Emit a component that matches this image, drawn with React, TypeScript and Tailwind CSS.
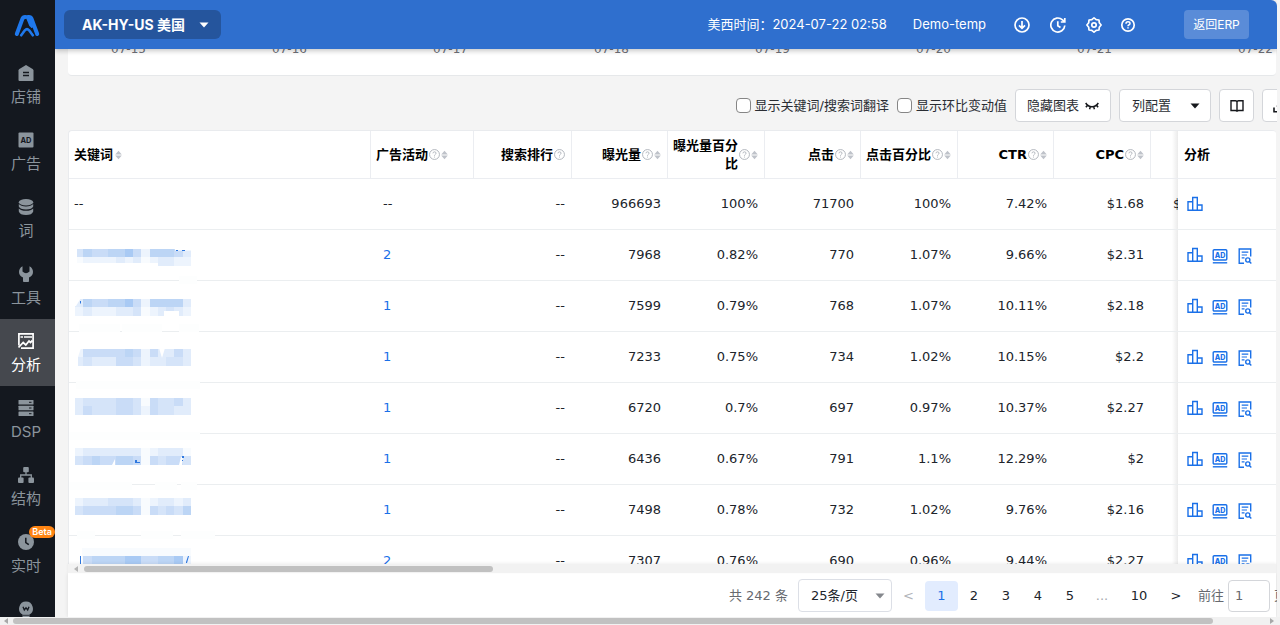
import React from "react";

type IconProps = { className?: string };

const NAV_ICON = "block size-4 shrink-0";

function Logo() {
  return (
    <svg viewBox="0 0 26 22" className="h-[22px] w-[26px]" aria-hidden="true">
      <path d="M2.800 19 L8.400 3.900 Q9.200 2 11 2 H11.500" fill="none" stroke="#1f78ec" strokeWidth="4" strokeLinecap="round" strokeLinejoin="round" />
      <path d="M23.200 19 L17.600 3.900 Q16.800 2 15 2 H13.800 L17.500 11" fill="none" stroke="#1f78ec" strokeWidth="4" strokeLinecap="round" strokeLinejoin="round" />
      <path d="M7.200 20.300 L10.900 15.300 Q13 13 15.100 15.300 L18.800 20.300" fill="none" stroke="#1f78ec" strokeWidth="2.600" strokeLinecap="round" strokeLinejoin="round" />
      <path d="M6.200 18.500 L9.600 12.200 Q13 10 16.400 12.200 L19.800 18.500" fill="none" stroke="#14181f" strokeWidth="1" />
    </svg>
  );
}

function ShopIcon() {
  return (
    <svg viewBox="0 0 16 16" className={NAV_ICON} fill="currentColor">
      <path d="M8 0 L14.6 4 Q15.5 4.600 15.500 5.500 V15 Q15.500 16 14.500 16 H1.500 Q.5 16 .5 15 V5.500 Q.5 4.600 1.400 4 Z" />
      <path d="M5 7.500 H11 M5 10.500 H11" stroke="#14181f" strokeWidth="1.300" />
    </svg>
  );
}

function AdSolidIcon() {
  return (
    <svg viewBox="0 0 16 16" className={NAV_ICON}>
      <rect x=".5" y=".5" width="15" height="15" rx="1" fill="currentColor" />
      <text x="8" y="10.700" textAnchor="middle" fontSize="7.500" fontWeight="700" fontFamily="Inter, sans-serif" fill="#14181f">AD</text>
    </svg>
  );
}

function StackIcon() {
  return (
    <svg viewBox="0 0 16 16" className={NAV_ICON} fill="currentColor">
      <ellipse cx="8" cy="3.200" rx="7.200" ry="3.200" />
      <path d="M.8 5 Q3 7.400 8 7.400 T15.200 5 V7.400 Q14 10.400 8 10.400 T.8 7.400 Z" />
      <path d="M.8 9.400 Q3 11.700 8 11.700 T15.200 9.400 V12.500 Q14 16 8 16 T.8 12.500 Z" />
    </svg>
  );
}

function WrenchIcon() {
  return (
    <svg viewBox="0 0 16 16" className={NAV_ICON} fill="currentColor">
      <path d="M4.500 .3 V5.500 Q8 9 11.500 5.500 V.3 Q15 2.200 15 6 Q15 9.800 11 11.600 V15 Q11 16.500 8 16.500 Q5 16.500 5 15 V11.600 Q1 9.800 1 6 Q1 2.200 4.500 .3 Z" />
      <path d="M6 0 V4.500 Q8 6.400 10 4.500 V0 Z" fill="#14181f" />
    </svg>
  );
}

function AnalysisIcon() {
  return (
    <svg viewBox="0 0 16 16" className={NAV_ICON} fill="none" stroke="currentColor">
      <path d="M.9 12.500 V.9 H15.100 V15.100 H3" strokeWidth="1.700" />
      <path d="M2.500 4 H5 M6 4 H14" strokeWidth="1.300" />
      <path d="M.5 14.500 L5.200 9.500 L7.800 12 L11 8 L12.500 9.500 L14.500 7.500" strokeWidth="1.800" />
    </svg>
  );
}

function ServerIcon() {
  return (
    <svg viewBox="0 0 16 16" className={NAV_ICON} fill="currentColor">
      <rect x=".5" y="0" width="15" height="4.600" rx=".6" />
      <rect x=".5" y="5.700" width="15" height="4.600" rx=".6" />
      <rect x=".5" y="11.400" width="15" height="4.600" rx=".6" />
      <path d="M11 2.300 H13.500 M11 8 H13.500 M11 13.700 H13.500" stroke="#14181f" strokeWidth="1" />
    </svg>
  );
}

function TreeIcon() {
  return (
    <svg viewBox="0 0 16 16" className={NAV_ICON} fill="currentColor">
      <rect x="5.200" y="0" width="5.600" height="5.200" rx="1" />
      <rect x="0" y="10.500" width="5.600" height="5.500" rx="1" />
      <rect x="10.400" y="10.500" width="5.600" height="5.500" rx="1" />
      <path d="M8 4 V8 M2.700 11.500 V8 H13.300 V11.500" fill="none" stroke="currentColor" strokeWidth="1.300" />
    </svg>
  );
}

function ClockIcon() {
  return (
    <svg viewBox="0 0 16 16" className={NAV_ICON}>
      <circle cx="8" cy="8" r="8" fill="currentColor" />
      <path d="M7.800 3.700 V8.500 L10.800 10.600" fill="none" stroke="#14181f" strokeWidth="1.500" />
    </svg>
  );
}

function BulbIcon() {
  return (
    <svg viewBox="0 0 16 16" className={NAV_ICON}>
      <path d="M8 .5 A7 7 0 0 1 11.500 13.500 V16 H4.500 V13.500 A7 7 0 0 1 8 .5 Z" fill="currentColor" />
      <path d="M5 5.800 L6.300 9 L8 6.800 L9.700 9 L11 5.800" fill="none" stroke="#14181f" strokeWidth="1.300" />
      <path d="M4.500 14.300 H11.500" stroke="#14181f" strokeWidth=".8" />
    </svg>
  );
}

function HeaderIcon({ children }: { children: React.ReactNode }) {
  return (
    <svg viewBox="0 0 16 16" className="block size-4" fill="none" stroke="currentColor" strokeWidth="1.700">
      {children}
    </svg>
  );
}

function Caret({ className = "" }: IconProps) {
  return (
    <svg viewBox="0 0 10 6" className={"pointer-events-none block h-1.5 w-2.5 shrink-0 " + className} fill="currentColor">
      <path d="M.5 .5 H9.500 L5 5.500 Z" />
    </svg>
  );
}

function HelpMark() {
  return (
    <svg viewBox="0 0 12 12" className="block size-[11px] shrink-0" fill="none" stroke="#adb1b9">
      <circle cx="6" cy="6" r="5.400" />
      <path d="M4.300 4.700 Q4.400 3.100 6 3.100 Q7.700 3.100 7.700 4.600 Q7.700 5.400 6.700 6 Q6 6.400 6 7.300 M6 8.300 V9.300" />
    </svg>
  );
}

function SortMark() {
  return (
    <svg viewBox="0 0 7 10" className="block h-2.5 w-[7px] shrink-0" fill="#bfc3ca">
      <path d="M3.500 .8 L6.800 4.400 H.2 Z M3.500 9.200 L.2 5.600 H6.800 Z" />
    </svg>
  );
}

function BarsIcon() {
  return (
    <svg viewBox="0 0 16 16" className="block size-4" fill="none" stroke="#1a70e8" strokeWidth="1.400">
      <path d="M1 14.300 V5.700 H5.700 V14.300 Z M5.700 14.300 V1.500 H10.300 V14.300 Z M10.300 14.300 V9 H15 V14.300 Z" />
    </svg>
  );
}

function AdOutlineIcon() {
  return (
    <svg viewBox="0 0 16 16" className="block size-4">
      <rect x="1.200" y="1.700" width="13.600" height="10.300" rx="1" fill="none" stroke="#1a70e8" strokeWidth="1.400" />
      <path d="M.8 14.800 H15.200" stroke="#1a70e8" strokeWidth="1.400" />
      <text x="8" y="9.500" textAnchor="middle" fontSize="7.200" fontWeight="800" fontFamily="Inter, sans-serif" fill="#1a70e8">AD</text>
    </svg>
  );
}

function DocSearchIcon() {
  return (
    <svg viewBox="0 0 16 16" className="block size-4" fill="none" stroke="#1a70e8" strokeWidth="1.400">
      <path d="M7 15.300 H2.200 V1 H13.700 V8.500" />
      <path d="M4.700 4.200 H11.300 M4.700 7 H10 M4.700 9.800 H7.500" strokeWidth="1.200" />
      <circle cx="10.800" cy="12" r="2.100" />
      <path d="M12.300 13.500 L14.300 15.500" />
    </svg>
  );
}

const NAV = [
  { label: "店铺", icon: ShopIcon },
  { label: "广告", icon: AdSolidIcon },
  { label: "词", icon: StackIcon },
  { label: "工具", icon: WrenchIcon },
  { label: "分析", icon: AnalysisIcon, active: true },
  { label: "DSP", icon: ServerIcon },
  { label: "结构", icon: TreeIcon },
  { label: "实时", icon: ClockIcon, badge: "Beta" },
  { label: "", icon: BulbIcon },
];

const CHART_DATES = ["07-15", "07-16", "07-17", "07-18", "07-19", "07-20", "07-21", "07-22"];

const COLUMNS = [
  { label: "广告活动", help: true, sort: true, left: true },
  { label: "搜索排行", help: true, sort: false },
  { label: "曝光量", help: true, sort: true },
  { label: "曝光量百分比", help: true, sort: true },
  { label: "点击", help: true, sort: true },
  { label: "点击百分比", help: true, sort: true },
  { label: "CTR", help: true, sort: true },
  { label: "CPC", help: true, sort: true },
];

const TINTS: Record<string, string> = {
  a: "#f8fbfe",
  b: "#edf4fd",
  c: "#e1ecfb",
  d: "#d5e4f9",
  e: "#c9dcf7",
  f: "#bcd5f5",
  g: "#a9caf4",
};

type Mask = {
  y: number;
  top: string;
  bottom: string;
  clears?: string;
  marks?: string;
  smudges?: [number, number, number][];
};

const MASKS: Mask[] = [
  { y: 19, top: "dfeeffgebfffec", bottom: "abbbbcbcabccbb", clears: "M0 18h2v17H0Z M87 19h13v1.500h16v-3H87Z M0 33h83v3H0Z", marks: "M101 20h2v1h-2Z M107 20h3v1h-3Z", smudges: [[104, 18, 46]] },
  { y: 18, top: "cfeeffgebffffc", bottom: "bcbbbccdabcdcb", clears: "M0 17h6l-5 8H0Z M89 30h15v5H89Z", marks: "M5 20h1v2l-1 1Z", smudges: [[4, 41, 43], [47, 40, 43], [104, 20, 43]] },
  { y: 17, top: "beeeeefebeccec", bottom: "cdccceedbccddc", clears: "M0 16h6l-3 9v10H0Z M84 16h6l-3 10Z", smudges: [[1, 124, 49]] },
  { y: 15, top: "cddddeedaeddec", bottom: "cedddeedbeddcc", smudges: [[-6, 131, 49]] },
  { y: 14, top: "bcccccccabccca", bottom: "defeeffeaedeed", clears: "M37 31h3v-6Z M104 31l2-8h2l-1 8Z", marks: "M60 26h2v2h3v1h-5Z M107 22h2v2h-2Z M107 26h1v1h-1Z", smudges: [[-6, 63, 48], [80, 22, 48], [106, 16, 48]] },
  { y: 13, top: "bcccdddcabccbc", bottom: "deeeeffeaededfd", smudges: [[2, 18, 46], [66, 32, 46], [106, 34, 46]] },
  { y: 12, top: "aaaaaaaaaaaaaa", bottom: "aeffffggeeffgb", clears: "M0 11h7v18H0Z", marks: "M5 20h1v8h-1Z M113 20h1l-2 7h-1v-1Z" },
];

function MaskedKeyword({ mask }: { mask: Mask }) {
  const cells = (line: string, y: number) =>
    line
      .slice(0, 14)
      .split("")
      .map((t, i) => (
        <rect key={i} x={(i * 116) / 14} y={y} width={116 / 14} height={8.4} fill={TINTS[t]} shapeRendering="crispEdges" />
      ));
  return (
    <svg viewBox="0 0 116 50" className="block h-[50px] w-[116px] overflow-visible" aria-label="masked keyword">
      {cells(mask.top, mask.y)}
      {cells(mask.bottom, mask.y + 8.4)}
      {mask.clears && <path d={mask.clears} fill="#fff" />}
      {mask.marks && <path d={mask.marks} fill="#2f78df" />}
      {mask.smudges?.map(([x, w, y]) => (
        <rect key={x} x={x} y={y} width={w} height="8" fill="#fdfefe" />
      ))}
    </svg>
  );
}

const ROWS = [
  ["2", "--", "7968", "0.82%", "770", "1.07%", "9.66%", "$2.31"],
  ["1", "--", "7599", "0.79%", "768", "1.07%", "10.11%", "$2.18"],
  ["1", "--", "7233", "0.75%", "734", "1.02%", "10.15%", "$2.2"],
  ["1", "--", "6720", "0.7%", "697", "0.97%", "10.37%", "$2.27"],
  ["1", "--", "6436", "0.67%", "791", "1.1%", "12.29%", "$2"],
  ["1", "--", "7498", "0.78%", "732", "1.02%", "9.76%", "$2.16"],
  ["2", "--", "7307", "0.76%", "690", "0.96%", "9.44%", "$2.27"],
];

const TOTALS = ["--", "--", "966693", "100%", "71700", "100%", "7.42%", "$1.68"];

const TH = "h-12 border-b border-r border-[#ebedf1] pl-[5px] pr-1.5 align-middle font-bold";
const TD = "h-[51px] border-b border-[#ebeef0] p-0";
const TOOL = "flex h-[33px] shrink-0 items-center rounded border border-[#d4d6da] bg-white text-[13px]";
const PINNED =
  " relative bg-white before:absolute before:inset-y-0 before:-left-1.5 before:w-1.5 before:bg-linear-to-l before:from-black/8 before:to-transparent before:content-['']";

function Sidebar() {
  return (
    <nav className="w-[55px] shrink-0 overflow-hidden bg-[#14181f] text-[#8b949c]">
      <a href="#home" aria-label="首页" className="flex h-[51px] items-center justify-center pr-0.5">
        <Logo />
      </a>
      {NAV.map(({ label, icon: Icon, active, badge }, i) => (
        <a
          key={i}
          href={"#nav-" + i}
          className={
            active
              ? "relative flex h-[67px] flex-col items-center gap-1 bg-[#45484e] pr-[3px] pt-3.5 text-white"
              : "relative flex h-[67px] flex-col items-center gap-1 pr-[3px] pt-3.5"
          }
        >
          <Icon />
          <span className="text-[15px] leading-6">{label}</span>
          {badge && (
            <span className="absolute right-0 top-1.5 rounded-full bg-[#ff8412] px-[3px] text-[9px] font-semibold leading-3 text-white">
              {badge}
            </span>
          )}
        </a>
      ))}
    </nav>
  );
}

function Header() {
  const iconButton = "flex items-center justify-center";
  return (
    <header className="relative z-20 flex h-[49px] shrink-0 items-center rounded-tr-md bg-[#2f6fce] pl-[9px] pr-7 text-white shadow-[0_2px_5px_rgba(0,0,0,0.22)]">
      <button className="flex h-[29px] w-[157px] items-center justify-between rounded-md bg-[#25559d] pl-[18px] pr-3">
        <span className="text-[14px] font-bold">AK-HY-US 美国</span>
        <Caret />
      </button>
      <div className="ml-auto flex items-center text-[13px]">
        <span>美西时间：2024-07-22 02:58</span>
        <span className="ml-[26px]">Demo-temp</span>
        <div className="ml-7 flex items-center gap-5">
          <button aria-label="下载" className={iconButton}>
            <HeaderIcon>
              <circle cx="8" cy="8" r="7" />
              <path d="M8 4 V11 M5 8.300 L8 11.300 L11 8.300" />
            </HeaderIcon>
          </button>
          <button aria-label="历史" className={iconButton}>
            <HeaderIcon>
              <path d="M14.800 8.500 A7 7 0 1 1 12.500 2.800 L14.500 4.700 M14.800 1 V5 H10.800" />
              <path d="M7.800 4.300 V8.700 L10.500 10.500" />
            </HeaderIcon>
          </button>
          <button aria-label="设置" className={iconButton}>
            <HeaderIcon>
              <path d="M8 .9 L10.200 2.700 L13 3 L13.300 5.800 L15.100 8 L13.300 10.200 L13 13 L10.200 13.300 L8 15.100 L5.800 13.300 L3 13 L2.700 10.200 L.9 8 L2.700 5.800 L3 3 L5.800 2.700 Z" strokeLinejoin="round" />
              <circle cx="8" cy="8" r="2.200" />
            </HeaderIcon>
          </button>
          <button aria-label="帮助" className="-ml-0.5 flex items-center justify-center">
            <HeaderIcon>
              <circle cx="8" cy="8" r="6.200" />
              <path d="M6 6.700 Q6 4.800 8 4.800 Q10 4.800 10 6.500 Q10 7.500 8.800 8 Q8 8.400 8 9.300 M8 10.300 V11.600" strokeWidth="1.500" />
            </HeaderIcon>
          </button>
        </div>
        <button className="ml-12 h-[29px] w-[65px] rounded bg-[#5a8cd8] text-[12px]">返回ERP</button>
      </div>
    </header>
  );
}

function Toolbar() {
  const box = "size-[15px] shrink-0 appearance-none rounded-sm border border-[#868686] bg-white";
  return (
    <div className="flex h-[54px] shrink-0 items-center justify-end gap-2 pt-[5px] text-[13px] text-[#2a2d33]">
      <label className="flex shrink-0 items-center gap-1 whitespace-nowrap">
        <input type="checkbox" className={box} />
        显示关键词/搜索词翻译
      </label>
      <label className="flex shrink-0 items-center gap-1 whitespace-nowrap">
        <input type="checkbox" className={box} />
        显示环比变动值
      </label>
      <button className={TOOL + " w-24 justify-center gap-1.5"}>
        隐藏图表
        <svg viewBox="0 0 14 8" className="block h-2 w-3.5" fill="none" stroke="#16181c" strokeWidth="1.500">
          <path d="M.7 1 Q3 4.800 7 4.800 T13.300 1 M2.600 3 L.9 5.200 M5.300 4.600 L4.600 7.200 M8.700 4.600 L9.400 7.200 M11.400 3 L13.100 5.200" />
        </svg>
      </button>
      <button className={TOOL + " w-[92px] justify-between pl-3 pr-2.5"}>
        列配置
        <Caret className="text-[#16181c]" />
      </button>
      <button aria-label="说明" className={TOOL + " w-[35px] justify-center"}>
        <svg viewBox="0 0 14 14" className="block size-3.5" fill="none" stroke="#16181c" strokeWidth="1.400">
          <path d="M1 1.800 H5.500 Q7 1.800 7 3.300 V12.500 Q6.500 11.500 5.500 11.500 H1 Z M13 1.800 H8.500 Q7 1.800 7 3.300 V12.500 Q7.500 11.500 8.500 11.500 H13 Z" />
        </svg>
      </button>
      <button aria-label="导出" className={TOOL + " -mr-[21px] w-[35px] justify-center"}>
        <svg viewBox="0 0 14 14" className="block size-3.5" fill="none" stroke="#16181c" strokeWidth="1.600">
          <path d="M1 8.500 V12.700 H13 V8.500 M7 1 V9 M4 6.500 L7 9.500 L10 6.500" />
        </svg>
      </button>
    </div>
  );
}

function Actions({ full }: { full: boolean }) {
  return (
    <div className="flex items-center gap-[9px] pl-[9px]">
      <button aria-label="图表"><BarsIcon /></button>
      {full && <button aria-label="广告" className="pt-px"><AdOutlineIcon /></button>}
      {full && <button aria-label="明细" className="pt-px"><DocSearchIcon /></button>}
    </div>
  );
}

function DataTable() {
  return (
    <div className="relative min-h-0 flex-1 overflow-hidden rounded-t-sm border-l border-t border-[#e9ebee] bg-white">
      <table className="w-full table-fixed border-separate border-spacing-0 text-[13px] text-[#20242b]">
        <colgroup>
          <col />
          <col className="w-[103px]" />
          <col className="w-[98px]" />
          <col className="w-24" />
          <col className="w-[97px]" />
          <col className="w-24" />
          <col className="w-[97px]" />
          <col className="w-24" />
          <col className="w-[97px]" />
          <col className="w-[27px]" />
          <col className="w-[98px]" />
        </colgroup>
        <thead className="leading-[18px] text-black">
          <tr>
            <th className={TH}>
              <div className="flex items-center gap-0.5">
                关键词
                <SortMark />
              </div>
            </th>
            {COLUMNS.map((c) => (
              <th key={c.label} className={TH}>
                <div className={c.left ? "flex items-center gap-px" : "flex items-center justify-end gap-px text-right"}>
                  <span className="min-w-0">{c.label}</span>
                  <HelpMark />
                  {c.sort && <SortMark />}
                </div>
              </th>
            ))}
            <th className="border-b border-[#ebedf1]" />
            <th className={"border-b border-[#ebedf1] pl-1.5 text-left" + PINNED}>分析</th>
          </tr>
        </thead>
        <tbody>
          <tr>
            <td className={TD + " pl-[5px]"}>--</td>
            {TOTALS.map((v, i) => (
              <td key={i} className={i === 0 ? TD + " pl-3" : TD + " pr-[7px] text-right"}>{v}</td>
            ))}
            <td className={TD + " overflow-hidden pl-[22px]"}>$</td>
            <td className={TD + PINNED}><Actions full={false} /></td>
          </tr>
          {ROWS.map((row, r) => (
            <tr key={r}>
              <td className={TD + " pl-1.5"}><MaskedKeyword mask={MASKS[r]} /></td>
              {row.map((v, i) =>
                i === 0 ? (
                  <td key={i} className={TD + " pl-3"}>
                    <a href={"#campaigns-" + r} className="text-[#1a70e8]">{v}</a>
                  </td>
                ) : (
                  <td key={i} className={TD + " pr-[7px] text-right"}>{v}</td>
                )
              )}
              <td className={TD} />
              <td className={TD + PINNED}><Actions full /></td>
            </tr>
          ))}
        </tbody>
      </table>
    </div>
  );
}

function TableScrollbar() {
  return (
    <div className="relative flex h-[9px] shrink-0 items-center bg-[#f2f2f2] pl-1.5 shadow-[0_-1px_3px_rgba(0,0,0,0.06)]">
      <svg viewBox="0 0 5 6" className="h-1.5 w-[5px]" fill="#b5b5b5"><path d="M4 0 V6 L0 3 Z" /></svg>
      <div className="ml-[5px] h-1.5 w-[34%] rounded-full bg-[#c1c1c1]" />
    </div>
  );
}

function Pagination() {
  const page = "w-8 shrink-0 text-center";
  return (
    <div className="flex h-[44px] shrink-0 items-center justify-end bg-white pt-px text-[13px] text-[#20242b] shadow-[0_0_4px_rgba(0,0,0,0.1)]">
      <span className="shrink-0 text-[#66696f]">共 242 条</span>
      <div className="relative ml-2.5 shrink-0">
        <select aria-label="每页条数" className="h-[33px] w-[94px] appearance-none rounded border border-[#dcdfe6] bg-white pl-3 text-[13px]">
          <option>25条/页</option>
        </select>
        <Caret className="absolute right-[7px] top-3.5 text-[#85888d]" />
      </div>
      <button aria-label="上一页" className="w-[33px] text-center text-[#b0b3b8]">&lt;</button>
      <button className="h-[30px] w-[33px] rounded bg-[#e2ecfe] text-[#1a70e8]">1</button>
      <button className={page}>2</button>
      <button className={page}>3</button>
      <button className={page}>4</button>
      <button className={page}>5</button>
      <span className={page + " text-[#a6a9ad]"}>...</span>
      <button className="w-[42px]">10</button>
      <button aria-label="下一页" className={page}>&gt;</button>
      <label className="-mr-[11px] ml-1.5 flex shrink-0 items-center gap-1 text-[#66696f]">
        前往
        <input defaultValue="1" className="h-8 w-[42px] rounded border border-[#d4d6da] bg-white px-1.5" />
        <span>页</span>
      </label>
    </div>
  );
}

export default function App() {
  return (
    <div className="flex h-screen flex-col overflow-hidden bg-[#f4f4f4]">
      <div className="flex min-h-0 flex-1 font-[family-name:Inter,'Noto_Sans_CJK_SC',sans-serif]">
        <Sidebar />
        <div className="mr-[3px] flex min-w-0 flex-1 flex-col overflow-hidden">
          <Header />
          <main className="flex min-h-0 flex-1 flex-col pl-[13px] pr-px font-[family-name:'DejaVu_Sans','Noto_Sans_CJK_SC',sans-serif]">
            <section className="h-[27px] shrink-0 overflow-hidden rounded-b border-b border-[#e6e8ea] bg-white">
              <div className="-ml-5 -mr-[60px] -mt-1.5 flex text-xs leading-3 text-[#6e7079]">
                {CHART_DATES.map((d) => (
                  <span key={d} className="flex-1 text-center">{d}</span>
                ))}
              </div>
            </section>
            <Toolbar />
            <DataTable />
            <TableScrollbar />
            <Pagination />
          </main>
        </div>
      </div>
      <div className="flex h-2 shrink-0 items-center bg-[#f1f1f1] pl-1 pr-1.5">
        <svg viewBox="0 0 5 6" className="h-1.5 w-[5px]" fill="#a8a8a8"><path d="M4 0 V6 L0 3 Z" /></svg>
        <div className="ml-1 h-1.5 w-[94.5%] rounded-full bg-[#c1c1c1]" />
        <svg viewBox="0 0 5 6" className="ml-auto h-1.5 w-[5px]" fill="#a8a8a8"><path d="M1 0 V6 L5 3 Z" /></svg>
      </div>
    </div>
  );
}
